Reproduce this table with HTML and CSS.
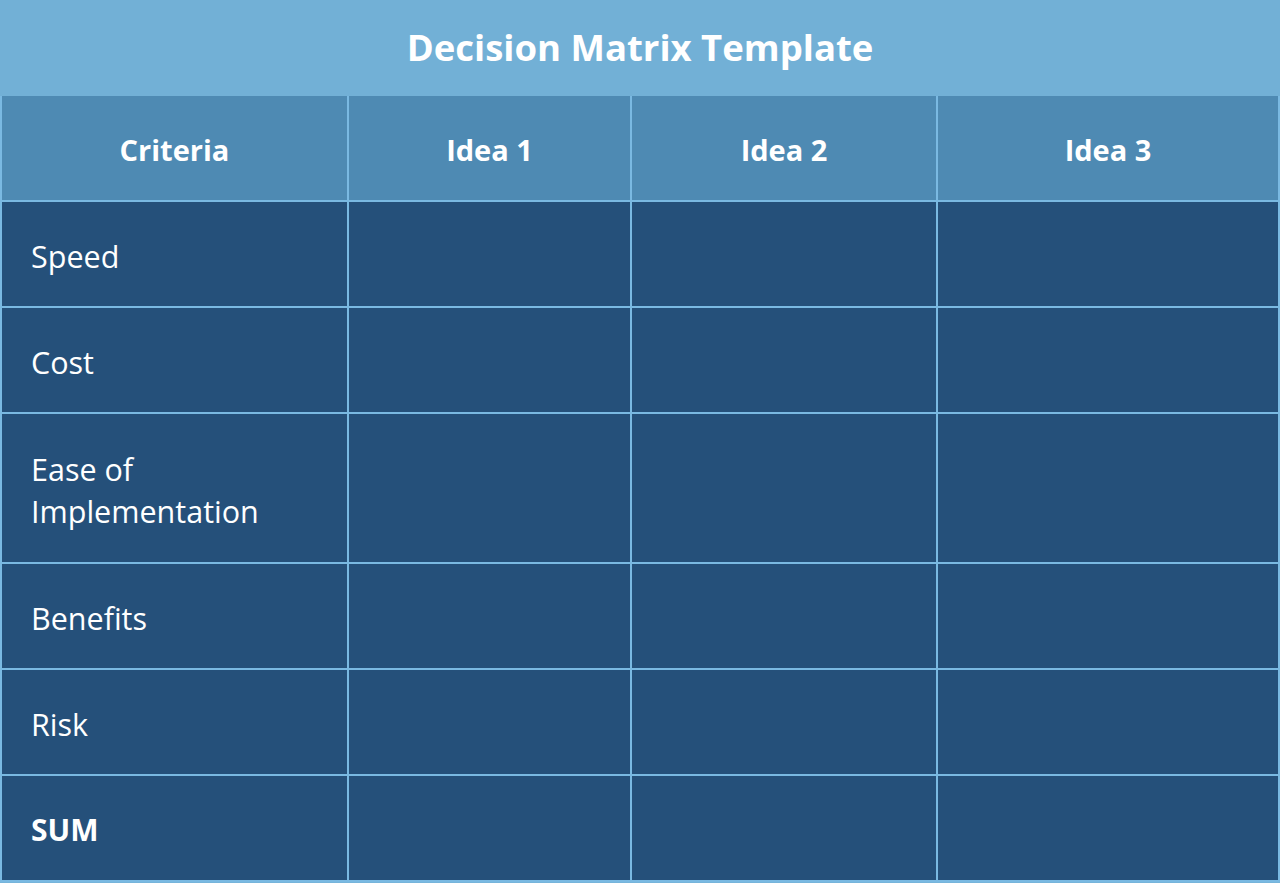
FILE: index.html
```html
<!DOCTYPE html>
<html>
<head>
<meta charset="utf-8">
<link rel="stylesheet" href="styles.css">
</head>
<body>
<div class="page">
  <header class="title">Decision Matrix Template</header>
  <div class="matrix">
    <div class="cell head">Criteria</div>
    <div class="cell head">Idea 1</div>
    <div class="cell head">Idea 2</div>
    <div class="cell head">Idea 3</div>

    <div class="cell label">Speed</div>
    <div class="cell"></div><div class="cell"></div><div class="cell"></div>

    <div class="cell label">Cost</div>
    <div class="cell"></div><div class="cell"></div><div class="cell"></div>

    <div class="cell label tall">Ease of<br>Implementation</div>
    <div class="cell"></div><div class="cell"></div><div class="cell"></div>

    <div class="cell label">Benefits</div>
    <div class="cell"></div><div class="cell"></div><div class="cell"></div>

    <div class="cell label">Risk</div>
    <div class="cell"></div><div class="cell"></div><div class="cell"></div>

    <div class="cell label sum">SUM</div>
    <div class="cell"></div><div class="cell"></div><div class="cell"></div>
  </div>
</div>
</body>
</html>
```
FILE: styles.css
```css
html, body {
  margin: 0;
  padding: 0;
  background: #76b4da;
}
body {
  width: 1280px;
  height: 883px;
  overflow: hidden;
  font-family: "Open Sans", "Liberation Sans", sans-serif;
  color: #ffffff;
}
.page {
  display: flex;
  flex-direction: column;
}
.title {
  height: 96px;
  background: #72b0d6;
  display: flex;
  align-items: center;
  justify-content: center;
  font-size: 36.5px;
  font-weight: 700;
  padding-bottom: 2px;
  box-sizing: border-box;
}
.matrix {
  display: grid;
  grid-template-columns: 345px 281px 304px 340px;
  grid-template-rows: 104px 104px 104px 148px 104px 104px 104px;
  gap: 2px;
  padding: 0 2px 2px 2px;
  background: #7ab9e2;
}
.cell {
  background: #25507a;
  display: flex;
  align-items: center;
  font-size: 30.5px;
}
.head {
  background: #4e8ab3;
  justify-content: center;
  font-weight: 700;
  font-size: 29px;
  padding-top: 2px;
}
.label {
  padding-left: 29px;
  padding-top: 4px;
  line-height: 42px;
}
.sum {
  font-weight: 700;
  font-size: 30px;
}
```
